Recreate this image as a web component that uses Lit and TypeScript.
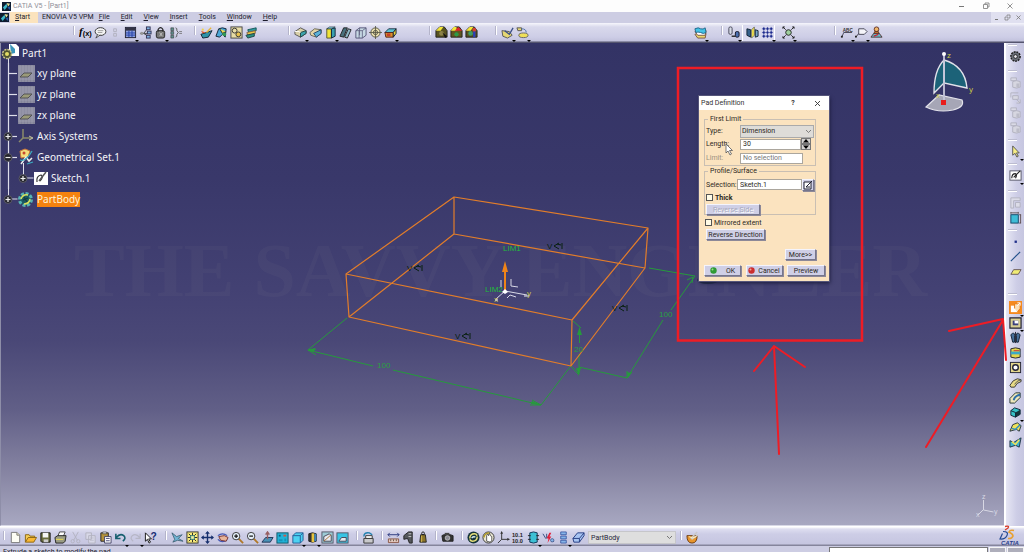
import { LitElement, html, svg, css, nothing } from "lit";

const grey = "#b2b2c0";

// Toolbar glyphs, each drawn on a 14 x 14 grid.
const icons: Record<string, any> = {
  formula: svg`<text x="0" y="10" font-family="Liberation Serif" font-style="italic" font-weight="700" font-size="12">f</text><text x="4" y="11" font-family="Liberation Sans" font-weight="700" font-size="8">(x)</text>`,
  comment: svg`<ellipse cx="7" cy="6" rx="5.8" ry="4.200" fill="#f4f4f4" stroke="#333"/><path d="M4 9l-2 4 5-3.500" fill="#ddd" stroke="#333" stroke-width=".8"/><path d="M4 5h6M4 7h5" stroke="#777" stroke-width=".7"/>`,
  url: svg`<path d="M5 3h3v3H5zM5 8h3v3H5z" fill="none" stroke="${grey}"/>`,
  table: svg`<rect x="1.500" y="1.500" width="11" height="11" fill="#8fa0dc" stroke="#223"/><rect x="2" y="2" width="10" height="3" fill="#334"/><path d="M2 7.500h10M2 9.800h10M5.300 5v7M8.600 5v7" stroke="#2340a8"/>`,
  law: svg`<path d="M1 8h4l4-5M5 8l5 3M5 8h5" fill="none" stroke="#444"/><rect x="8" y="1" width="4" height="3" fill="#7fb0e0" stroke="#335"/><rect x="9" y="5.500" width="4" height="3" fill="#7fb0e0" stroke="#335"/><rect x="8" y="10" width="4" height="3" fill="#7fb0e0" stroke="#335"/><circle cx="3" cy="8" r="1.700" fill="#999"/>`,
  lock: svg`<rect x="2.500" y="5" width="9" height="8" rx="2" fill="#777" stroke="#222"/><path d="M4.500 6V3.500Q7 0 9.500 3.500V6" fill="none" stroke="#222" stroke-width="1.300"/><path d="M6 7l3 4M9 7l-3 4" stroke="#ddd" stroke-width=".7"/>`,
  equiv: svg`<path d="M2 2h3v3H2zM2 6h3v3H2zM2 10h3v3H2z" fill="#5e8f8e" stroke="#333" stroke-width=".6"/><path d="M7 2q2 0 1.500 3l1.500 2-1.500 2q.5 3-1.500 3" fill="none" stroke="#555"/><path d="M11 6h3M11 8h3" stroke="#666" stroke-width=".8"/>`,
  publish: svg`<path d="M1 9l6-2 6-2-4 7-6 1z" fill="#2f93a8" stroke="#123"/><path d="M1 5l5 2-3 1z" fill="#e05a2a"/><path d="M7 7l5-5" stroke="#e8b63a" stroke-width="1.500"/><circle cx="3" cy="4" r="1.200" fill="#f2d44b"/>`,
  catalog: svg`<path d="M1 11l3-8q4-2 8 0l-1 9-3-3-3 3z" fill="#4aa7d8" stroke="#123"/><path d="M5 3l3 5 4-2" fill="#e8d75a" stroke="#232"/><circle cx="10" cy="9" r="2" fill="#395"/>`,
  scan: svg`<rect x="1" y="1" width="12" height="12" fill="#e8dca5" stroke="#444"/><circle cx="5" cy="5" r="2.600" fill="none" stroke="#333"/><circle cx="9" cy="9" r="2.600" fill="#e7c24e" stroke="#333"/>`,
  layers: svg`<path d="M3 4l9-2v3L4 7z" fill="#2f9aa0" stroke="#155"/><path d="M2 7l9-2v3l-8 2z" fill="#e9c645" stroke="#864"/><path d="M1 10l9-2v3l-7 2z" fill="#2b8f80" stroke="#244"/>`,
  fillet: svg`<path d="M1 6l6-4 6 3v3L7 12 1 9z" fill="#d8cfa8" stroke="#555"/><path d="M7 7l6-2v3l-6 4z" fill="#3ca4ae" stroke="#244"/><path d="M1 6q4-1 6 1" fill="none" stroke="#fff"/>`,
  chamfer: svg`<path d="M1 7l5-4 7 1v4l-5 4-6-2z" fill="#e4d4a6" stroke="#665"/><path d="M5 8l8-4v4l-5 4z" fill="#5bb1d8" stroke="#246"/>`,
  draft: svg`<path d="M3 3h5v10H3z" fill="#f0e437" stroke="#553"/><path d="M8 3l4-1v9l-4 2z" fill="#3aa0b0" stroke="#123"/><path d="M3 3l3-2h6L8 3z" fill="#88d0d8" stroke="#123" stroke-width=".6"/>`,
  shell: svg`<path d="M1 11l4-9h4l-4 10z" fill="#49707c" stroke="#222"/><path d="M6 12l4-9 3 1-4 9z" fill="#8db7c6" stroke="#222"/>`,
  thick: svg`<path d="M2 5l4-3h7v8l-4 3H2z" fill="#c7d9e4" stroke="#557"/><path d="M2 5h7v8M9 5l4-3M5.500 5v8M6 2v8" fill="none" stroke="#557" stroke-width=".8"/>`,
  thread: svg`<circle cx="7" cy="7" r="5" fill="#eadfae" stroke="#554"/><circle cx="7" cy="7" r="2.300" fill="none" stroke="#554"/><path d="M7 0v14M0 7h14" stroke="#554" stroke-width=".9"/>`,
  remove: svg`<path d="M1 7l4-4h8l-3 4z" fill="#5cc0d0" stroke="#234"/><path d="M1 7h9v5H2z" fill="#d8912a" stroke="#522"/><path d="M3 8h4v3H3z" fill="#c4402a"/><path d="M10 7l3-4v5l-3 4z" fill="#e9cf3b" stroke="#123"/>`,
  boolA: svg`<path d="M1 12V5l4-4h5l3 4v7z" fill="#57521f" stroke="#222"/><path d="M1 5l4-4h4L6 5z" fill="#f3e53c"/><circle cx="7" cy="8" r="2.500" fill="#8c8348"/><path d="M8 7l5 4-2 2z" fill="#111"/>`,
  boolB: svg`<path d="M1 12V5l4-4h5l3 4v7z" fill="#5f571f" stroke="#222"/><path d="M1 5l3-4h3v4z" fill="#f3e53c"/><path d="M5 5l4-4 4 4H9z" fill="#e0222a"/><circle cx="7" cy="9" r="2.300" fill="#2c9a46"/>`,
  boolC: svg`<path d="M1 12V5l4-4h5l3 4v7z" fill="#57521f" stroke="#222"/><path d="M1 5l4-4h4L6 5z" fill="#f3e53c"/><circle cx="6" cy="8" r="2.500" fill="#3f9c64"/><path d="M10 2v10" stroke="#2c3fbb" stroke-width="2.500"/><circle cx="10" cy="4" r="2" fill="#d8402e"/>`,
  sweepA: svg`<path d="M1 5l8 1 3 4-5 3-5-2z" fill="#e6d873" stroke="#555"/><path d="M4 5l5 4 4-7" fill="none" stroke="#3b4f86" stroke-width="1.400"/>`,
  sweepB: svg`<path d="M1 2h5v3H2z" fill="#e6d873" stroke="#555"/><path d="M6 3q5 0 5 4" fill="none" stroke="#4b6fa6"/><ellipse cx="8" cy="10" rx="5" ry="2.500" fill="#efe05a" stroke="#666"/>`,
  sheets: svg`<path d="M1 9l3-1h9l-1 5H4z" fill="#ecd86c" stroke="#754"/><path d="M1 6l3-1h9l-1 5H4z" fill="#fff" stroke="#754"/><path d="M1 3q4-2 6 0 3 1 5-1l1 5q-3 2-6 0-3-1-5 0z" fill="#43c3e6" stroke="#268"/>`,
  cyls: svg`<rect x="2" y="1" width="3.500" height="8" rx="1.500" fill="#d7dce8" stroke="#445"/><rect x="9" y="6" width="4" height="6" rx="1.500" fill="#4a6fb0" stroke="#112"/><path d="M5 11h4" stroke="#222" stroke-width="1.500"/>`,
  mirror: svg`<path d="M1 3l4 1v8l-4-2z" fill="#35618c" stroke="#123"/><path d="M6 4l3-3v9l-3 3z" fill="#f1e14a" stroke="#776"/><path d="M10 4l3 1v6l-3 1z" fill="#77a6c8" stroke="#123"/>`,
  pattern: svg`<path d="M3 1v12M7 1v12M11 1v12M1 3h12M1 7h12M1 11h12" stroke="#4853a8" stroke-width=".8"/><path d="M2 2h2v2H2zM6 2h2v2H6zM10 2h2v2h-2zM2 6h2v2H2zM6 6h2v2H6zM10 6h2v2h-2zM2 10h2v2H2zM6 10h2v2H6zM10 10h2v2h-2z" fill="#1d2a8c"/>`,
  scale: svg`<circle cx="7" cy="7" r="3" fill="#9fd09e" stroke="#222"/><path d="M1 1l3 3M13 1l-3 3M1 13l3-3M13 13l-3-3M1 3V1h2M11 1h2v2M1 11v2h2M11 13h2v-2" fill="none" stroke="#222"/>`,
  abc: svg`<text x="3" y="6" font-family="Liberation Sans" font-weight="700" font-size="5" fill="#333">ABC</text><path d="M2 12l2-5h9" fill="none" stroke="#445"/><path d="M1 10.500h2v2H1z" fill="#222"/>`,
  flag: svg`<path d="M4 3h6l3 3-3 3H4z" fill="#f5f5fa" stroke="#445"/><path d="M1 12l3-4" stroke="#445"/><path d="M0 10.500h2v2H0z" fill="#222"/>`,
  stamp: svg`<circle cx="7" cy="3.500" r="2.500" fill="#f0b66a" stroke="#632"/><path d="M5 6h4l1 3H4z" fill="#d07a2b" stroke="#632"/><path d="M1 12l3-4h6l3 4z" fill="#5ec2d2" stroke="#533"/><path d="M4 11l5-2" stroke="#c23" stroke-width="1.500"/>`,
  newFile: svg`<path d="M2.500 1.500h6l3 3v8h-9z" fill="#fdfdf4" stroke="#777"/><path d="M8.500 1.500v3h3" fill="#e9e3b8" stroke="#777"/>`,
  open: svg`<path d="M1.500 12V4h4l1 1.500h5V7" fill="#f6cf57" stroke="#8a6413"/><path d="M1.500 12l3-5h9l-3 5z" fill="#f9b834" stroke="#8a6413"/>`,
  save: svg`<path d="M2 2h10v10H3l-1-1z" fill="#6b6d3e" stroke="#111"/><path d="M4 2h6v5H4z" fill="#f5f5f5"/><path d="M5 9h5v3H5z" fill="#ccc"/>`,
  print: svg`<path d="M4 6l2-5h6l-2 5z" fill="#fff" stroke="#444"/><path d="M1 7l3-2h9l-1 6-2 2H2z" fill="#9a9c85" stroke="#222"/><path d="M2 9h8" stroke="#f2e04c"/>`,
  cut: svg`<path d="M4 1l5 9M10 1L5 10" stroke="${grey}"/><circle cx="4" cy="11" r="1.800" fill="none" stroke="${grey}"/><circle cx="10" cy="11" r="1.800" fill="none" stroke="${grey}"/>`,
  copy: svg`<path d="M2 2h6v7H2zM5 5h7v8H5z" fill="#d8d8e8" stroke="${grey}"/><path d="M6.500 7.500h4M6.500 10h4" stroke="${grey}" stroke-width=".7"/>`,
  paste: svg`<path d="M2 2h8v9H2z" fill="#b3923c" stroke="#222"/><path d="M4 1h4v2H4z" fill="#ddd" stroke="#333" stroke-width=".6"/><path d="M6 6h7v7H6z" fill="#fff" stroke="#446"/><path d="M7.500 8h4M7.500 10.500h4" stroke="#447"/>`,
  undo: svg`<path d="M2 3v5h5M2.500 7q4-5 8-2 3 3-1 6" fill="none" stroke="#155f6e" stroke-width="1.700"/>`,
  redo: svg`<path d="M12 3v5H7M11.500 7q-4-5-8-2-3 3 1 6" fill="none" stroke="#b6b6c6" stroke-width="1.300"/>`,
  whatsThis: svg`<path d="M1.500 2v9l2.200-2 1.800 4 1.500-1-2-3.500h3z" fill="#fff" stroke="#111"/><text x="7" y="10" font-family="Liberation Sans" font-weight="700" font-size="11" fill="#152b74">?</text>`,
  fly: svg`<path d="M1 2l5 4 6-2-4 4 5 3-6-1-5 2 2-3z" fill="#71b4d4" stroke="#356" stroke-width=".8"/>`,
  fit: svg`<rect x="1" y="1" width="12" height="12" fill="#f8ea7a" stroke="#333"/><path d="M7 2v10M2 7h10M3 3l8 8M11 3l-8 8" stroke="#222"/><path d="M5 5h4v4H5z" fill="#f4f0a0" stroke="#2a7a7a"/>`,
  pan: svg`<path d="M7 1v12M1 7h12" stroke="#18306e" stroke-width="1.500"/><path d="M7 0l2.500 3h-5zM7 14l2.500-3h-5zM0 7l3-2.500v5zM14 7l-3-2.500v5z" fill="#18306e"/>`,
  rotate: svg`<path d="M2 5q5-4 10 0M12 9q-5 5-10 0" fill="none" stroke="#4558b5" stroke-width="1.300"/><path d="M3 6l6-1 4 2-2 4-6-1z" fill="#e7b59a" stroke="#733"/>`,
  zoomIn: svg`<path d="M8 8l5 5" stroke="#b07828" stroke-width="2"/><circle cx="5.500" cy="5.500" r="4" fill="#e6f0fa" stroke="#333"/><path d="M3.500 5.500h4M5.500 3.500v4" stroke="#111" stroke-width="1.300"/>`,
  zoomOut: svg`<path d="M8 8l5 5" stroke="#b07828" stroke-width="2"/><circle cx="5.500" cy="5.500" r="4" fill="#e6f0fa" stroke="#333"/><path d="M3.500 5.500h4" stroke="#111" stroke-width="1.300"/>`,
  normal: svg`<path d="M1 12l4-5h8l-3 5z" fill="#4a93b8" stroke="#235"/><path d="M7 9V2M5 4l2-3 2 3" fill="none" stroke="#985f62" stroke-width="1.500"/>`,
  multi: svg`<rect x="1" y="2" width="12" height="11" fill="#22b3d8" stroke="#156"/><path d="M3 4h2v2H3z" fill="#0b5d80"/><path d="M8 4h3v2H8z" fill="#c85a4a"/><path d="M3 9h4v2H3zM9 8h2v3H9z" fill="#1793b8"/>`,
  cube: svg`<path d="M2 5l3-3h8v8l-3 3H2z" fill="#4dd2f2" stroke="#235b96"/><path d="M2 5h8v8M10 5l3-3" fill="none" stroke="#235b96"/>`,
  shade: svg`<path d="M3 3q4-2 8 0v8q-4 2-8 0z" fill="#333" stroke="#222"/><path d="M6 2.500h3v9.500H6z" fill="#e8c43e"/><path d="M9 3h2v8H9z" fill="#3c84bf"/>`,
  hide: svg`<rect x="1" y="1" width="12" height="12" fill="#9ccbd6" stroke="#556"/><path d="M3 11V6l6-3 2 2v6z" fill="#e8eaf0" stroke="#445"/><path d="M3 11l8-7" stroke="#a8733a"/>`,
  swap: svg`<rect x="1" y="2" width="12" height="11" fill="#38c4e4" stroke="#556"/><path d="M3 11l3-4h5v4z" fill="#e8eaf0" stroke="#445"/>`,
  linkedPrint: svg`<path d="M2 8h10v5H2z" fill="#c9c9cc" stroke="#333"/><path d="M4 5h7v3H4z" fill="#fff" stroke="#333"/><path d="M2 6q0-5 6-4l3 2" fill="none" stroke="#1f7fae" stroke-width="1.500"/>`,
  measure: svg`<path d="M1 4h12M3 2L1 4l2 2M11 2l2 2-2 2" fill="none" stroke="#28377c"/><path d="M1.500 8.500h11v4h-11z" fill="#e4c9c0" stroke="#854"/><path d="M4 9v2M7 9v2M10 9v2" stroke="#654"/>`,
  measureItem: svg`<path d="M2 5l5-4h4v12H8l-2-5-4 1z" fill="#55585c" stroke="#222"/><path d="M7 3h3M7 6h3" stroke="#ccc"/>`,
  weight: svg`<path d="M4 4h5l1 8H3z" fill="#8b742a" stroke="#222"/><circle cx="6.500" cy="2.500" r="1.500" fill="none" stroke="#222"/><path d="M5 5v7" stroke="#d6bb50"/>`,
  camera: svg`<path d="M1 5l2-1h7l3 1v6H2z" fill="#333" stroke="#222"/><circle cx="7" cy="7.500" r="2.500" fill="#8a8a94" stroke="#ddd" stroke-width=".7"/><path d="M4 2h5v2H4z" fill="#444"/>`,
  update: svg`<circle cx="7" cy="7" r="6.500" fill="#16343a"/><path d="M3 8q0-5 5-5 2 0 3 2M11 6q0 5-5 5-2 0-3-2" fill="none" stroke="#e9e17a" stroke-width="1.600"/><path d="M5 7.500q2-2 4-1" fill="none" stroke="#d6eef0" stroke-width="1.500"/>`,
  manual: svg`<circle cx="7" cy="7" r="6" fill="#e9e6d3" stroke="#333"/><path d="M5 11V5l1-2 1 2 1-3 1 3 1.500 1v4L9 12z" fill="#fff" stroke="#333" stroke-width=".8"/><path d="M2 7q1-5 6-5" fill="none" stroke="#b39a23" stroke-width="1.500"/>`,
  axis: svg`<path d="M5 1v8h8M5 9l-4 4" fill="none" stroke="#333"/><path d="M5 0l1.500 3h-3zM14 9l-3-1.500v3z" fill="#333"/>`,
  units: svg`<text x="0" y="6" font-family="Liberation Sans" font-weight="700" font-size="6" fill="#222">10.1</text><text x="0" y="13" font-family="Liberation Sans" font-weight="700" font-size="6" fill="#222">10.0</text>`,
  bodyBox: svg`<path d="M3 2q4-2 8 0v10q-4 2-8 0z" fill="#3dc0d4" stroke="#135"/><path d="M1 5h3M10 5h3M1 9h3M10 9h3" stroke="#222"/>`,
  zap: svg`<path d="M1 3l3 5 3-2M5 3v4M10 11h3" fill="none" stroke="#35497c"/><circle cx="11" cy="10" r="1.800" fill="#86b4e8" stroke="#35497c" stroke-width=".7"/><path d="M8 2L5 8h2l-1 5 4-7H8l2-4z" fill="#e2203a"/>`,
  list: svg`<path d="M4 1h6v3H4zM4 5.500h6v3H4zM4 10h6v3H4z" fill="#86b4e8" stroke="#2b4a9a" stroke-width=".8"/>`,
  eraser: svg`<path d="M1 8l5-6h7v3l-5 7H2z" fill="#a8c4f2" stroke="#233a80"/><path d="M1 8h7l5-6M8 8v4" fill="none" stroke="#233a80"/>`,
  bowl: svg`<path d="M1 5h11q0 8-5.500 8T1 5z" fill="#e8952c" stroke="#6d3a0c"/><path d="M5 8l7-7M6 9l7-5" stroke="#c9c9c9" stroke-width="1.500"/><path d="M3 6q4 3 8 0" fill="none" stroke="#fff1c0"/>`,
  gear: svg`<circle cx="7" cy="7" r="5" fill="#6a6f78" stroke="#222" stroke-dasharray="2 1" stroke-width="1.600"/><circle cx="7" cy="7" r="2" fill="#e8e8ee" stroke="#222"/>`,
  ghostA: svg`<path d="M2 2h6v3H2z" fill="#dadae6" stroke="${grey}"/><path d="M4 6q4-2 8 0v6q-4 2-8 0z" fill="#d6d6e0" stroke="${grey}"/><path d="M8 8h3v4H8z" fill="#bcbcc8"/>`,
  ghostB: svg`<path d="M2 2h8M2 2v5M4 5h6v4H4zM8 9l4 4M12 9v4H8" fill="#d8d8e2" stroke="${grey}"/>`,
  select: svg`<path d="M4 1v10l2.500-2 2 4 1.500-1-2-3.500H11z" fill="#f7ee84" stroke="#555"/>`,
  sketch: svg`<rect x="1" y="2" width="12" height="10" fill="#fff" stroke="#556"/><path d="M3 10q0-5 4-5 2 1 0 5M5 9l7-7" fill="none" stroke="#222" stroke-width="1.200"/>`,
  ghostC: svg`<path d="M2 2h10v3H5v8H2zM7 7h5v5H7z" fill="#dcdce8" stroke="${grey}"/>`,
  constraintBox: svg`<rect x="2" y="4" width="8" height="9" fill="#3fbcd6" stroke="#146"/><path d="M2 1v2M10 1v2M2 2h8M11 4h2M11 13h2M12.500 4v9" stroke="#544" stroke-width=".9"/>`,
  point: svg`<rect x="6" y="6" width="2.500" height="2.500" fill="#21308a"/>`,
  line: svg`<path d="M2 12L12 2" stroke="#21508a" stroke-width="1.300"/>`,
  plane: svg`<path d="M2 10l3-5h8l-3 5z" fill="#f0ec74" stroke="#655"/>`,
  pad: svg`<rect width="14" height="14" fill="#f58a1f"/><path d="M2 12V5h7v7z" fill="#fff"/><path d="M6 8V3h6v5l-3 4" fill="#fbe0b8" stroke="#e87a10"/><path d="M9 5l3-3M9 2h3v3" fill="none" stroke="#fff"/>`,
  pocket: svg`<path d="M1 2h12v11H1z" fill="#d8cf94" stroke="#223" stroke-width="1.300"/><path d="M4 5h6v5H4z" fill="#3b3f7c"/><path d="M6 5h4v3H6z" fill="#fff"/>`,
  shaft: svg`<path d="M2 4q4-4 4 1v7H4zM12 4q-4-4-4 1v7h2z" fill="#49709b" stroke="#123"/><path d="M7 1v12" stroke="#223"/>`,
  groove: svg`<path d="M2 3q5-2 10 0v9q-5 2-10 0z" fill="#e3d44a" stroke="#223"/><path d="M2 6h10v3H2z" fill="#3ba8c6"/><path d="M5 5h6" stroke="#c33"/>`,
  hole: svg`<rect x="1.500" y="1.500" width="11" height="11" fill="#e3d68c" stroke="#223"/><circle cx="7" cy="7" r="3" fill="#fff" stroke="#223" stroke-width="1.500"/>`,
  rib: svg`<path d="M1 10q3-6 8-7l4 1v2q-5 1-7 6H2z" fill="#e9dc86" stroke="#333"/><path d="M6 9q2-4 7-5" fill="none" stroke="#555"/>`,
  slot: svg`<path d="M1 8l6-6h5v5l-6 6H1z" fill="#efe8bb" stroke="#233"/><path d="M5 10q1-5 7-6" fill="none" stroke="#2d6fa8" stroke-width="2"/>`,
  stiffener: svg`<path d="M2 5l4-3 6 2v5l-5 3-5-2z" fill="#36c1c6" stroke="#123"/><path d="M7 7l5-3v5l-5 3z" fill="#14333a"/><path d="M2 5l5 2v5" fill="none" stroke="#123"/>`,
  loft: svg`<path d="M1 11l3-7 5-2 4 3-2 6-3-2z" fill="#efe25a" stroke="#234"/><path d="M3 8l4 1 5-5" fill="none" stroke="#2e8fc0" stroke-width="1.500"/>`,
  loftCut: svg`<path d="M1 12V5l4 2 8-5-2 10-4-2z" fill="#3eb3cc" stroke="#234"/><path d="M3 6l4 3 4-5" fill="none" stroke="#efe25a" stroke-width="1.600"/>`,
};

// [glyph, label, has a fly-out menu]
type Tool = [string, string, boolean?];
type Group = { cls: string; tools: Tool[] };

const topGroups: Group[] = [
  { cls: "w121 sep", tools: [["formula", "Formula"], ["comment", "Comment"], ["url", "URL"], ["table", "Design Table", true], ["law", "Law"], ["lock", "Lock", true], ["equiv", "Equivalent Dimensions"]] },
  { cls: "w94 sep", tools: [["publish", "Publish"], ["catalog", "Catalog"], ["scan", "Scan"], ["layers", "Layers"]] },
  { cls: "w141 sep", tools: [["fillet", "Edge Fillet", true], ["chamfer", "Chamfer"], ["draft", "Draft Angle", true], ["shell", "Shell"], ["thick", "Thickness"], ["thread", "Thread"], ["remove", "Remove Face", true]] },
  { cls: "w66 sep", tools: [["boolA", "Assemble"], ["boolB", "Union Trim"], ["boolC", "Remove Lump"]] },
  { cls: "sep", tools: [["sweepA", "Split", true], ["sweepB", "Sew Surface", true]] },
];
const topRight: Group[] = [
  { cls: "w29", tools: [["sheets", "Surface", true]] },
  { cls: "w20 sep", tools: [["cyls", "Translation", true]] },
  { cls: "w33 raised", tools: [["mirror", "Mirror"], ["pattern", "Pattern", true]] },
  { cls: "w59", tools: [["scale", "Scaling", true]] },
  { cls: "w189 sep", tools: [["abc", "Text with Leader", true], ["flag", "Flag Note", true], ["stamp", "Apply Material"]] },
];
const bottomGroups: Group[] = [
  { cls: "w162 sep", tools: [["newFile", "New"], ["open", "Open"], ["save", "Save"], ["print", "Print"], ["cut", "Cut"], ["copy", "Copy"], ["paste", "Paste"], ["undo", "Undo", true], ["redo", "Redo", true], ["whatsThis", "What's This?"]] },
  { cls: "w191 sep", tools: [["fly", "Fly Mode"], ["fit", "Fit All In"], ["pan", "Pan"], ["rotate", "Rotate"], ["zoomIn", "Zoom In"], ["zoomOut", "Zoom Out"], ["normal", "Normal View"], ["multi", "Multi-View"], ["cube", "Isometric View", true], ["shade", "Shading", true], ["hide", "Hide/Show"], ["swap", "Swap Visible Space"]] },
  { cls: "w25 sep", tools: [["linkedPrint", "Quick Print"]] },
  { cls: "w54 sep", tools: [["measure", "Measure Between"], ["measureItem", "Measure Item"], ["weight", "Measure Inertia"]] },
  { cls: "w26 sep", tools: [["camera", "Capture"]] },
  { cls: "sep", tools: [["update", "Update All"], ["manual", "Manual Update"], ["axis", "Axis System"], ["units", "Mean Dimensions"], ["bodyBox", "Create Datum", true], ["zap", "Only Current Body"], ["list", "Catalog Browser", true], ["eraser", "Current Body"]] },
];
const sideGroups: Group[] = [
  { cls: "h26", tools: [["gear", "Workbench"]] },
  { cls: "h69", tools: [["ghostA", "Insert Body"], ["ghostB", "Insert Set"], ["ghostA", "Insert Group"], ["ghostA", "Insert Feature"]] },
  { cls: "h24", tools: [["select", "Select", true]] },
  { cls: "h27", tools: [["sketch", "Sketch", true]] },
  { cls: "h39", tools: [["ghostC", "Constraints Dialog"], ["constraintBox", "Constraint"]] },
  { cls: "h64", tools: [["point", "Point"], ["line", "Line"], ["plane", "Plane"]] },
  { cls: "last", tools: [["pad", "Pad", true], ["pocket", "Pocket", true], ["shaft", "Shaft"], ["groove", "Groove"], ["hole", "Hole"], ["rib", "Rib"], ["slot", "Slot"], ["stiffener", "Stiffener", true], ["loft", "Multi-sections Solid"], ["loftCut", "Removed Multi-sections Solid"]] },
];

const toolButton = ([name, label, menu]: Tool) => html`
  <button class="tool" aria-label=${label}>
    <svg viewBox="0 0 14 14" width="13" height="13" aria-hidden="true">${icons[name]}</svg>
    ${menu ? html`<i class="fly"></i>` : nothing}
  </button>`;
const groupTpl = (g: Group) => html`<div class="group ${g.cls}" role="group">${g.tools.map(toolButton)}</div>`;

const barStyles = css`
  * { box-sizing: border-box; }
  button { font: inherit; color: inherit; padding: 0; margin: 0; border: 0; background: none; }
  .group { display: flex; flex: none; position: relative; padding-left: 4px; }
  .sep::before { content: ""; position: absolute; left: 0; top: 1px; width: 1px; height: 9px; background: #fff; box-shadow: -1px 0 #b4b4ca; }
  .tool { position: relative; display: flex; align-items: center; justify-content: center; width: 15px; height: 15px; flex: none; }
  .fly { position: absolute; right: -1px; bottom: -2px; border: 2px solid transparent; border-top: 2px solid #000; border-bottom: 0; }
`;

const appLogo = html`<svg class="applogo" viewBox="0 0 10 10" width="9" height="9" aria-hidden="true">
  <rect width="10" height="10" fill="#0d1c30"/><path d="M1 6l4-4 1 3-3 4z" fill="#3db8c9"/><path d="M5 1l4 1-2 3z" fill="#e8e29a"/><path d="M6 6l3-1v4z" fill="#2857a8"/></svg>`;

class CatTop extends LitElement {
  static styles = [barStyles, css`
    :host { display: block; flex: none; font: 7px/10px Roboto, "Open Sans", sans-serif; color: #1c1c2c; }
    .title { display: flex; align-items: center; height: 12px; background: #fdfdfd; color: #8f8f98; padding: 0 2px; }
    .title span { padding-left: 2px; }
    .win { margin-left: auto; display: flex; }
    .win button { width: 24px; height: 12px; display: flex; align-items: center; justify-content: center; }
    .menu { display: flex; height: 11px; background: #cdcde3; align-items: center; }
    .menu a { color: inherit; text-decoration: none; padding: 0 6px 0 5px; line-height: 11px; }
    .menu a.start { background: #fbe3bd; padding: 0 8px 0 5px; margin: 0 -1px 0 1px; }
    .menu a.plain { padding: 0 0 0 5px; }
    .menu a::first-letter { text-decoration: underline; }
    .menu a.plain::first-letter { text-decoration: none; }
    .mdi { margin-left: auto; display: flex; }
    .mdi button { width: 11px; height: 11px; background: #e0e0f0; display: flex; align-items: center; justify-content: center; }
    .bar { display: flex; height: 20px; padding: 2px 0 0 74px; background: linear-gradient(#f6f6fc, #d9d9ec 4px, #cdcde6 14px, #c2c2dc 18px, #55556f 19px); }
    .right { margin-left: auto; display: flex; }
    .w121 { width: 121px; } .w94 { width: 94px; } .w141 { width: 141px; } .w66 { width: 66px; }
    .w29 { width: 29px; padding-left: 0; } .w20 { width: 20px; } .w33 { width: 33px; padding-left: 2px; } .w59 { width: 60px; padding-left: 6px; } .w189 { width: 189px; }
    .raised { background: #d9d9ee; border-left: 1px solid #fff; border-right: 1px solid #fff; height: 16px; }
  `];
  render() {
    return html`
      <header class="title">${appLogo}<span>CATIA V5 - [Part1]</span>
        <div class="win">
          <button aria-label="Minimize"><svg width="8" height="8"><path d="M1 4.500h5" stroke="#777"/></svg></button>
          <button aria-label="Restore"><svg width="8" height="8"><path d="M1.500 2.500h4v4h-4zM3 2V1h4v4H6" fill="none" stroke="#777" stroke-width=".8"/></svg></button>
          <button aria-label="Close"><svg width="8" height="8"><path d="M1.500 1.500l5 5M6.500 1.500l-5 5" stroke="#777" stroke-width=".8"/></svg></button>
        </div>
      </header>
      <nav class="menu">${appLogo}
        <a class="start" href="#">Start</a><a class="plain" href="#">ENOVIA V5 VPM</a>
        ${["File", "Edit", "View", "Insert", "Tools", "Window", "Help"].map((m) => html`<a href="#">${m}</a>`)}
        <div class="mdi">
          <button aria-label="Minimize document"><svg width="7" height="7"><path d="M2 5.500h3" stroke="#777"/></svg></button>
          <button aria-label="Restore document"><svg width="7" height="7"><path d="M1 3h3v3H1zM3 2V1h3v3H5" fill="none" stroke="#777" stroke-width=".7"/></svg></button>
          <button aria-label="Close document"><svg width="7" height="7"><path d="M1.500 1.500l4 4M5.500 1.500l-4 4" stroke="#777" stroke-width=".8"/></svg></button>
        </div>
      </nav>
      <div class="bar" role="toolbar">${topGroups.map(groupTpl)}<div class="right">${topRight.map(groupTpl)}</div></div>`;
  }
}
customElements.define("cat-top", CatTop);

class CatSide extends LitElement {
  static styles = [barStyles, css`
    :host { box-sizing: border-box; display: flex; flex-direction: column; flex: none; width: 20px; padding-top: 2px; border-left: 2px solid #fff; background: linear-gradient(90deg, #e6e6f4, #cdcde6 60%, #c6c6e0); }
    .group { flex-direction: column; align-items: center; padding: 4px 0 0; }
    .group::before { content: ""; position: absolute; left: 2px; top: 0; width: 9px; height: 1px; background: #fff; box-shadow: 0 -1px #bcbcd0; }
    .h26 { height: 26px; } .h69 { height: 69px; } .h24 { height: 24px; } .h27 { height: 27px; } .h39 { height: 39px; } .h64 { height: 64px; }
    .last { padding-top: 6px; }
  `];
  render() { return html`${sideGroups.map(groupTpl)}`; }
}
customElements.define("cat-side", CatSide);

class CatBottom extends LitElement {
  static styles = [barStyles, css`
    :host { display: block; flex: none; font: 7px/10px Roboto, "Open Sans", sans-serif; color: #1c1c2c; }
    .bar { display: flex; height: 20px; padding: 4px 0 0 4px; background: linear-gradient(#fff 1px, #dedef0 3px, #cdcde6 8px, #c6c6e0 18px, #85859c 19px); }
    .w162 { width: 162px; } .w191 { width: 191px; } .w25 { width: 25px; } .w54 { width: 54px; } .w26 { width: 26px; }
    .combo { display: flex; position: relative; margin: 1px 5px 0 2px; }
    select { appearance: none; width: 88px; height: 13px; margin: 0; padding: 0 2px; border: 1px solid #c6c6ca; border-radius: 0; background: #dedede; font: inherit; color: #26263a; }
    .chev { position: absolute; right: 3px; top: 4px; }
    .logo { margin: -5px 3px 0 auto; }
    .status { display: flex; height: 6px; overflow: hidden; background: #cdcde3; padding-left: 3px; }
    .status span { flex: 1; line-height: 12px; }
    .status input { width: 159px; height: 10px; margin: 1px 0 0; border: 1px solid #777; background: #fff; padding: 0; border-radius: 0; }
    .status button { width: 17px; height: 8px; margin: 1px 0 0 1px; border: 1px solid #f4f4f4; background: #aeaebb; }
  `];
  render() {
    return html`
      <div class="bar" role="toolbar">
        ${bottomGroups.map(groupTpl)}
        <label class="combo"><select aria-label="Current body"><option>PartBody</option></select>
          <svg class="chev" width="7" height="5"><path d="M1 1l2.500 2.500L6 1" fill="none" stroke="#777"/></svg></label>
        ${groupTpl({ cls: "sep", tools: [["bowl", "Render Style"]] })}
        <svg class="logo" width="24" height="22" viewBox="0 0 24 22" role="img" aria-label="DS CATIA">
          <path d="M8 1.500q5-1 3 1.500l-3 2" fill="none" stroke="#d83c2c" stroke-width="1.300"/>
          <path d="M6 6.500q6 0 4 4-2 4-7 3.500l2.500-5.500" fill="none" stroke="#234a94" stroke-width="1.200"/>
          <path d="M17 5.500q-4-1-5 1.500 4 2 4 4-1 3-5 2.500" fill="none" stroke="#e8a030" stroke-width="1.600"/>
          <text x="4" y="20" font-family="Liberation Sans" font-weight="700" font-style="italic" font-size="6" fill="#2a3f8c">CATIA</text>
        </svg>
      </div>
      <footer class="status"><span>Extrude a sketch to modify the pad</span><input aria-label="Power input"><button aria-label="Log"></button><button aria-label="Help"></button></footer>`;
  }
}
customElements.define("cat-bottom", CatBottom);

const gridIcon = svg`<rect x="17" y="2" width="17" height="17" fill="#85859a"/><path d="M17 4h17M17 6h17M17 8h17M17 10h17M17 12h17M17 14h17M17 16h17M19 2v17M22 2v17M25 2v17M28 2v17M31 2v17" stroke="#a9a9ba" stroke-width=".5"/><path d="M19 14l4-4h8l-4 4z" fill="#9a9a78" stroke="#4c4c50" stroke-width=".9"/>`;
const stem = svg`<path d="M7.500 0v21" stroke="#dedeea" stroke-width="1.200"/>`;
const tick = svg`<path d="M7 10.500h9" stroke="#dedeea" stroke-width="1.200"/>`;
const node = (x: number, open: boolean) => svg`<circle cx="${x}" cy="10.500" r="4" fill="#24242c" stroke="#5a5a68"/><path d="M${x - 2.5} 10.500h5" stroke="#eee" stroke-width="1.200"/>${open ? nothing : svg`<path d="M${x} 8v5" stroke="#eee" stroke-width="1.200"/>`}`;

class CatTree extends LitElement {
  static styles = css`
    :host { display: block; font: 10px/15px "Noto Sans", "Open Sans", sans-serif; color: #f4f4f8; }
    ul { list-style: none; margin: 0; padding: 0; }
    .row { display: flex; align-items: center; height: 21px; }
    .root { height: 20px; }
    svg { flex: none; margin-right: 1px; }
    .hot { background: #f5820f; color: #fff3d8; }
  `;
  render() {
    const planes = ["xy plane", "yz plane", "zx plane"];
    return html`<ul role="tree">
      <li><div class="row root"><svg width="20" height="20"><path d="M7.500 12v8" stroke="#dedeea"/><path d="M8 1h7l3 3v9H8z" fill="#fff"/><path d="M9 1l5 5v4l-4 1z" fill="#3a94b8"/><circle cx="6" cy="11" r="4.500" fill="#4d5230" stroke="#c9c489" stroke-width="1.500" stroke-dasharray="2 1"/><circle cx="6" cy="11" r="2" fill="#e3dc66"/></svg>Part1</div></li>
      ${planes.map((p) => html`<li><div class="row"><svg width="35" height="21">${stem}${tick}${gridIcon}</svg>${p}</div></li>`)}
      <li><div class="row"><svg width="35" height="21">${stem}${tick}${node(7, false)}<path d="M22 3v9h9M22 12l-4 4" fill="none" stroke="#8b8b6a" stroke-width="1.500"/><path d="M28 10l4 2-4 2" fill="none" stroke="#c4c4a2"/></svg>Axis Systems</div></li>
      <li><div class="row"><svg width="35" height="21">${stem}${tick}<path d="M22.500 16v5" stroke="#dedeea"/>${node(7, true)}<path d="M19 4l5-2 5 2-2 6-7 1z" fill="#f3dd7c" stroke="#c8743a"/><path d="M20 17l5-7 3 4 3-3" fill="none" stroke="#f0f0ee" stroke-width="1.500"/><path d="M19 13q6 2 12-9M26 17l6-2" fill="none" stroke="#3aa9c0" stroke-width="1.300"/><circle cx="23" cy="6" r="1.500" fill="#c8472e"/></svg>Geometrical Set.1</div>
        <ul><li><div class="row"><svg width="49" height="21">${stem}<path d="M22.500 0v10h10" fill="none" stroke="#dedeea"/>${node(22, false)}<rect x="33" y="4" width="14" height="13" fill="#fff"/><path d="M36 14q-1-6 4-7 3 2-1 6" fill="none" stroke="#333" stroke-width="1.200"/><path d="M38 13l7-9" stroke="#555" stroke-width="1.500"/></svg>Sketch.1</div></li></ul></li>
      <li><div class="row"><svg width="35" height="21"><path d="M7.500 0v10h9" fill="none" stroke="#dedeea"/>${node(7, false)}<circle cx="24.500" cy="10.500" r="6" fill="#1c5a62" stroke="#57b3b4" stroke-width="3" stroke-dasharray="3 1.600"/><path d="M20 10q2-5 7-4M29 10q-1 5-6 5" fill="none" stroke="#d8e05a" stroke-width="1.500"/><path d="M22 11l5-2M23 8l3 5" stroke="#123c40" stroke-width="1.200"/></svg><span class="hot">PartBody</span></div></li>
    </ul>`;
  }
}
customElements.define("cat-tree", CatTree);

class PadDialog extends LitElement {
  static styles = css`
    * { box-sizing: border-box; }
    :host { display: block; width: 130px; font: 7px/10px Roboto, "Open Sans", sans-serif; color: #2c2823; background: #fbe3bf; box-shadow: 0 0 0 1px #55557a, 1px 2px 4px #1a1a3a; }
    button, input, select { font: inherit; color: inherit; margin: 0; padding: 0; border-radius: 0; white-space: nowrap; }
    .title { display: flex; align-items: center; height: 14px; background: #fff; padding-left: 2px; color: #333; }
    .title span { flex: 1; }
    .title button { border: 0; background: none; width: 24px; height: 14px; display: flex; align-items: center; justify-content: center; font-weight: 700; }
    .body { padding: 5px 4px 5px 5px; }
    fieldset { position: relative; min-width: 0; border: 1px solid #c9bfb3; margin: 4px 9px 0 0; padding: 0 1px; height: 47px; }
    fieldset.second { height: 44px; margin-top: 5px; }
    legend { position: absolute; top: -6px; left: 3px; padding: 0 2px; background: #fbe3bf; }
    .row { display: flex; align-items: center; }
    .r1 { height: 14px; margin-top: 4px; } .r2 { height: 12px; } .r3 { height: 14px; margin-top: 1px; }
    .first label { width: 34px; flex: none; }
    .first select { appearance: none; flex: 1; min-width: 0; height: 13px; padding: 0 1px; border: 1px solid #aaa; background: #dedcd8; }
    .pick { position: relative; display: flex; flex: 1; min-width: 0; }
    .pick svg { position: absolute; right: 2px; top: 4px; }
    .text { height: 11px; border: 1px solid #aba69d; background: #fff; min-width: 0; width: 0; padding: 0 2px; }
    .len { flex: 1; } .first .lim { width: 63px; color: #777; }
    .dim { color: #9c927f; }
    .spin { display: flex; flex-direction: column; flex: none; width: 10px; margin-right: 3px; }
    .spin button { height: 6px; border: 1px solid #777; background: #d4d2d0; display: flex; align-items: center; justify-content: center; }
    .sel { height: 13px; margin-top: 6px; }
    .sel label { width: 31px; flex: none; }
    .sel .text { flex: 1; }
    .btn { height: 11px; line-height: 8px; border: 1px solid; border-color: #f4f4fc #75758c #75758c #f4f4fc; background: #cfcfe6; box-shadow: 1px 1px #8c8898; display: flex; align-items: center; justify-content: center; gap: 9px; }
    .edit { width: 12px; height: 12px; flex: none; }
    .chk { display: flex; align-items: center; gap: 2px; height: 13px; }
    .chk input { appearance: none; width: 7px; height: 7px; border: 1px solid #555; background: #fffbe6; }
    .bold { font-weight: 700; }
    .side { width: 54px; color: #a8a8bc; text-shadow: 1px 1px #fff; }
    .mirror { margin: 1px 0 0 1px; }
    .rev { width: 59px; margin: 0 0 9px 2px; }
    .more { width: 31px; margin: 0 9px 5px auto; }
    .acts { display: grid; grid-template-columns: 37px 37px 38px; justify-content: space-between; }
    .acts .cancel { gap: 3px; }
  `;
  render() {
    return html`
      <div class="title"><span>Pad Definition</span><button aria-label="Help">?</button><button aria-label="Close"><svg width="7" height="7"><path d="M1 1l5 5M6 1L1 6" stroke="#333" stroke-width=".9"/></svg></button></div>
      <form class="body">
        <fieldset class="first"><legend>First Limit</legend>
          <div class="row r1"><label for="type">Type:</label><div class="pick"><select id="type"><option>Dimension</option></select><svg width="7" height="5"><path d="M1 1l2.500 2.500L6 1" fill="none" stroke="#666" stroke-width=".8"/></svg></div></div>
          <div class="row r2"><label for="len">Length:</label><input id="len" class="text len" value="30">
            <div class="spin"><button type="button" aria-label="Increase"><svg width="6" height="4"><path d="M3 0l3 3.500H0z"/></svg></button><button type="button" aria-label="Decrease"><svg width="6" height="4"><path d="M3 4l3-3.500H0z"/></svg></button></div></div>
          <div class="row r3"><label class="dim" for="lim">Limit:</label><input id="lim" class="text lim" value="No selection" readonly></div>
        </fieldset>
        <fieldset class="second"><legend>Profile/Surface</legend>
          <div class="row sel"><label for="sel">Selection:</label><input id="sel" class="text" value="Sketch.1"><button type="button" class="btn edit" aria-label="Edit sketch"><svg width="10" height="10"><path d="M1 2h7v7H1z" fill="#fff" stroke="#223"/><path d="M3 7l6-6M3 7h4" stroke="#223"/></svg></button></div>
          <label class="chk bold"><input type="checkbox">Thick</label>
          <button type="button" class="btn side" disabled>Reverse Side</button>
        </fieldset>
        <label class="chk mirror"><input type="checkbox">Mirrored extent</label>
        <button type="button" class="btn rev">Reverse Direction</button>
        <button type="button" class="btn more">More&gt;&gt;</button>
        <div class="acts">
          <button type="button" class="btn"><svg width="7" height="7"><circle cx="3.500" cy="3.500" r="3.200" fill="#2f9a35"/><circle cx="2.500" cy="2.500" r="1" fill="#9be08c"/></svg>OK</button>
          <button type="button" class="btn cancel"><svg width="7" height="7"><circle cx="3.500" cy="3.500" r="3.200" fill="#cc2e2e"/><circle cx="2.500" cy="2.500" r="1" fill="#f3a79c"/></svg>Cancel</button>
          <button type="button" class="btn">Preview</button>
        </div>
      </form>`;
  }
}
customElements.define("pad-dialog", PadDialog);

class CatView extends LitElement {
  static styles = css`
    :host { display: block; position: relative; flex: 1; min-width: 0; overflow: hidden; border-left: 1px solid #8e8ea8;
      background: linear-gradient(#333365, #39386a 28%, #434173 51%, #4a4877 62%, #615f87 76%, #8684a2 89%, #a8a8c1); }
    .scene { position: absolute; left: -1px; top: -43px; width: 100%; height: 600px; overflow: visible; }
    .wire { fill: none; stroke: #e27d2a; stroke-width: 1.2; stroke-linejoin: round; }
    .dim { fill: none; stroke: #269a3c; stroke-width: 1; }
    .fill { fill: #269a3c; }
    .gt { font: 8px "Liberation Sans", sans-serif; fill: #2aa040; }
    .lim { fill: #22bb3c; }
    .v { font: 8px "Liberation Sans", sans-serif; fill: #08200f; }
    .mark { fill: none; stroke: #08200f; stroke-width: 1; }
    .ax { font: 8px "Liberation Sans", sans-serif; fill: #c9c845; }
    .wm { font: 700 76px "Liberation Serif", serif; fill: #77738c; opacity: .1; }
    cat-tree { position: relative; }
    .floating { position: absolute; left: 698px; top: 53px; }
    .corner { position: absolute; right: 2px; bottom: 6px; }
    .compass { position: absolute; right: 24px; top: 6px; }
  `;
  render() {
    const marks = [[547, 249], [407, 271], [612, 311], [455, 339]];
    return html`
      <svg class="scene" aria-hidden="true">
        <text class="wm" x="74" y="296">THE SAVVY ENGINEER</text>
        <g class="dim">
          <path d="M347 318L308 350L373 366M393 370L541 405L570 367M649 268L695 276L671 310M663 320L627 378L579 367M573 321L581 328M579.500 329V343M579 354V374M571 366L578 374"/>
          <path d="M308 350l8-1M308 350l8 5M541 405l-9-5M541 405l-11 0M693 277l-6 3M693 277l-1 6M627 378l0-7M627 378l5-6"/>
        </g>
        <g class="fill"><path d="M579.500 327l2.500 8h-5zM578.500 376l2.500-8h-5zM307 350l8-2-1 4zM541 405l-9-4-1 3zM628 378l-1-6 4 1z"/></g>
        <g class="wire">
          <path d="M454 197L648 228L572 320L346 274ZM454 234L645 268L571 366L349 317ZM454 197V234M648 228L645 268M572 320L571 366M346 274L349 317"/>
        </g>
        <text class="gt" x="377" y="368">100</text><text class="gt" x="659" y="317">100</text><text class="gt" x="574" y="352">20</text>
        <text class="gt lim" x="503" y="251">LIM1</text><text class="gt lim" x="485" y="292">LIM2</text>
        ${marks.map(([x, y]) => svg`<text class="v" x="${x}" y="${y}">V</text><path class="mark" d="M${x + 12} ${y - 6}l-5 3 5 3M${x + 10} ${y - 5}l4 1M${x + 15} ${y - 6}v6"/>`)}
        <path d="M505 291l22 4M505 291l-9 8M501 280v7M511 279v7l7 1M507 298l3-3 6 2" fill="none" stroke="#d8d8e6"/>
        <path d="M505 291V272" stroke="#f08418" stroke-width="2"/><path d="M505 261l3 11h-6z" fill="#f08418"/><path d="M505 289l3 3-3 2-3-2z" fill="#fff"/>
        <text class="ax" x="527" y="296">y</text><text class="ax" x="494" y="302">x</text>
        <path d="M529 296h-5M498 300h-3" stroke="#eee"/>
        <ellipse cx="708" cy="280" rx="11" ry="4" fill="#24304c"/>
      </svg>
      <cat-tree></cat-tree>
      <svg class="compass" width="60" height="66" viewBox="920 49 60 66" aria-hidden="true">
        <path d="M926 107L939 95L962 100Q965 107 953 110Q938 113 926 107Z" fill="#a6a6b6" stroke="#e2e2ea" stroke-width="1.200"/>
        <path d="M944 60Q965 66 967 88L944 83Z" fill="#1c6278" stroke="#e2e2ea" stroke-width="1.400"/>
        <path d="M944 60Q934 70 934 93L944 83Z" fill="#1c6278" stroke="#e2e2ea" stroke-width="1.400"/>
        <path d="M944 54V100" stroke="#c6c6da" stroke-width="1.800"/><circle cx="944" cy="54" r="2" fill="#fff"/>
        <path d="M941 100h5v5h-5z" fill="#e81c1c"/>
        <text class="ax" x="947" y="58">z</text><text class="ax" x="969" y="92">y</text><text class="ax" x="936" y="98">x</text>
      </svg>
      <svg class="corner" width="26" height="26" viewBox="978 494 26 26" aria-hidden="true">
        <path d="M985.500 501v10l10 2M985 511l-5 5" fill="none" stroke="#d8d8e4"/>
        <g font-family="Liberation Sans" font-size="7" fill="#d8d8e4"><text x="984" y="500">z</text><text x="996" y="515">y</text><text x="978" y="518">x</text></g>
      </svg>
      <pad-dialog class="floating"></pad-dialog>`;
  }
}
customElements.define("cat-view", CatView);

class AppRoot extends LitElement {
  static styles = css`
    :host { display: flex; flex-direction: column; position: relative; height: 100vh; overflow: hidden; background: #cdcde3; }
    .main { display: flex; flex: 1; min-height: 0; }
    cat-view { border-bottom: 1px solid #d8d8e6; }
    .marks { position: absolute; left: 0; top: 0; width: 100%; height: 100%; pointer-events: none; }
    .red { fill: none; stroke: #ee1c25; stroke-width: 2; stroke-linecap: round; stroke-linejoin: round; }
    .box { stroke-width: 2.5; stroke-linejoin: miter; }
  `;
  render() {
    return html`
      <cat-top></cat-top>
      <div class="main"><cat-view></cat-view><cat-side></cat-side></div>
      <cat-bottom></cat-bottom>
      <svg class="marks" aria-hidden="true">
        <rect class="red box" x="678" y="68" width="184" height="272.500"/>
        <path class="red" d="M779 454L774 346M754 371L774 346L805 367M926 447L1003 320M949 331L1003 319L1006 360"/>
        <path d="M726 144v9l2-2 2 4 1.500-1-2-3.500h3z" fill="#fff" stroke="#555" stroke-width=".8"/>
      </svg>`;
  }
}
customElements.define("app-root", AppRoot);
